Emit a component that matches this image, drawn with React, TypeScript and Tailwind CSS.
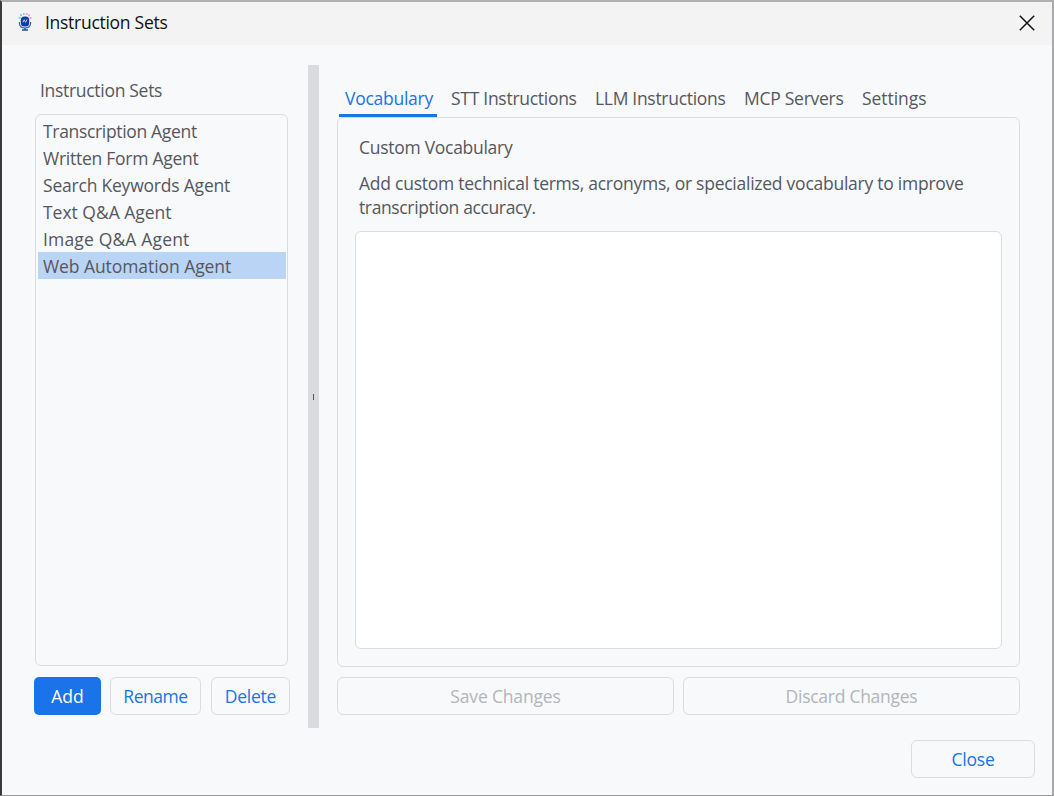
import React from "react";

const agents = [
  { name: "Transcription Agent", spacing: "tracking-[-0.33px]" },
  { name: "Written Form Agent", spacing: "tracking-[-0.26px]" },
  { name: "Search Keywords Agent", spacing: "tracking-[-0.21px]" },
  { name: "Text Q&A Agent", spacing: "tracking-[-0.02px]" },
  { name: "Image Q&A Agent", spacing: "tracking-[0.16px]" },
  { name: "Web Automation Agent", spacing: "tracking-[-0.07px]" },
];

const tabs = [
  { name: "Vocabulary", box: "w-[98px] pl-[6px] tracking-[-0.26px] border-b-[3px] border-[#1a73e8] text-[#1a73e8]" },
  { name: "STT Instructions", box: "w-[144px] pl-[14px] tracking-[-0.28px]" },
  { name: "LLM Instructions", box: "w-[149px] pl-[14px] tracking-[-0.3px]" },
  { name: "MCP Servers", box: "w-[118px] pl-[14px] tracking-[-0.27px]" },
  { name: "Settings", box: "w-[90px] pl-[14px] tracking-[-0.06px]" },
];

function MicIcon() {
  return (
    <svg width="14" height="19" viewBox="0 0 14 19" fill="none">
      <rect x="2.8" y="3.6" width="8.4" height="10" rx="3.6" fill="#123f9c" />
      <path d="M1.4 9v1c0 3 2.3 5 5.6 5s5.6-2 5.6-5V9" stroke="#3465b5" strokeWidth="1.2" />
      <path d="M7 15v2.4M4 17h6" stroke="#234f9f" strokeWidth="1.4" />
      <path d="M5 9.3l1.2-2.6 1.3 2.6L9 6.5" stroke="#b9d4ff" strokeWidth="1" />
      <path d="M.5 3.8h2v2h-2zM2 1.2h2V3H2zM5 0h1.6v2H5z" fill="#65d9f0" />
      <path d="M7.9 0h1.6v2H7.9zM10 1.5h2v1.8h-2zM11.6 4h1.9v2h-1.9z" fill="#f19bd5" />
    </svg>
  );
}

export default function App() {
  return (
    <div className="flex h-[796px] w-[1054px] flex-col overflow-hidden border-t-2 border-r-2 border-b border-l-2 border-t-[#b0b0b0] border-r-[#a9a9ab] border-b-[#999a9c] border-l-[#3b3b3d] bg-[#f8f9fb] font-['Open_Sans','Noto_Sans',sans-serif] text-[17.5px] text-[#54585d]">
      <header className="flex h-[43px] shrink-0 items-center bg-[#f3f3f3] pr-[17px] pb-[2px] pl-4 text-[#111]">
        <MicIcon />
        <h1 className="ml-[13px] grow pb-px leading-6 tracking-[-0.28px]">Instruction Sets</h1>
        <svg width="16" height="16" viewBox="0 0 16 16" stroke="#111" strokeWidth="1.5" fill="none">
          <path d="M.8.8l14.4 14.4M15.2.8L.8 15.2" />
        </svg>
      </header>

      <main className="flex h-[683px] shrink-0 pt-5 pl-8">
        <aside className="flex w-[256px] flex-col">
          <h2 className="mt-[13px] h-[36px] pl-[6px] leading-6 tracking-[-0.3px]">Instruction Sets</h2>
          <ul className="ml-px h-[552px] w-[253px] rounded-[6px] border border-[#dadce0] pt-[2px] pr-px pl-[2px]">
            {agents.map((a, i) => (
              <li key={a.name} className={`h-[27px] pl-[5px] leading-[28px] whitespace-nowrap ${a.spacing} ${i === 5 ? "bg-[#bad4f5]" : ""}`}>
                {a.name}
              </li>
            ))}
          </ul>
          <div className="mt-[11px] flex h-[38px] text-[#1a73e8]">
            <button className="w-[67px] rounded-[5px] bg-[#1a73e8] text-white">Add</button>
            <button className="ml-[9px] w-[91px] rounded-[6px] border border-[#dadce0] tracking-[-0.45px]">Rename</button>
            <button className="ml-[10px] w-[79px] rounded-[6px] border border-[#dadce0] tracking-[-0.25px]">Delete</button>
          </div>
        </aside>

        <div className="ml-[18px] flex w-[11px] items-center justify-center bg-[#dadbdf]">
          <div className="h-[6px] w-px bg-[#55565a]" />
        </div>

        <section className="ml-[18px] flex w-[683px] flex-col">
          <nav className="mt-[16px] ml-[2px] flex h-[36px]">
            {tabs.map((t) => (
              <button key={t.name} className={`flex h-[36px] items-start text-left leading-[35px] whitespace-nowrap ${t.box}`}>
                {t.name}
              </button>
            ))}
          </nav>
          <div className="h-[550px] rounded-[6px] border border-[#dadce0] px-[17px] pt-[17px]">
            <h3 className="pl-[4px] leading-6 tracking-[-0.28px]">Custom Vocabulary</h3>
            <p className="mt-[12px] h-[60px] pl-[4px] leading-6 tracking-[-0.25px] whitespace-nowrap">
              Add custom technical terms, acronyms, or specialized vocabulary to improve
              <br />
              <span className="tracking-[-0.37px]">transcription accuracy.</span>
            </p>
            <textarea className="block h-[418px] w-[647px] resize-none rounded-[6px] border border-[#dadce0] bg-white outline-none" />
          </div>
          <div className="mt-[10px] flex h-[38px] gap-[9px] text-[#b2b5ba]">
            <button className="flex-1 rounded-[6px] border border-[#dadce0] tracking-[-0.17px]" disabled>Save Changes</button>
            <button className="flex-1 rounded-[6px] border border-[#dadce0] tracking-[-0.27px]" disabled>Discard Changes</button>
          </div>
        </section>
      </main>

      <footer className="mt-[12px] flex justify-end pr-[17px]">
        <button className="h-[38px] w-[124px] rounded-[6px] border border-[#dadce0] tracking-[-0.2px] text-[#1a73e8]">Close</button>
      </footer>
    </div>
  );
}
